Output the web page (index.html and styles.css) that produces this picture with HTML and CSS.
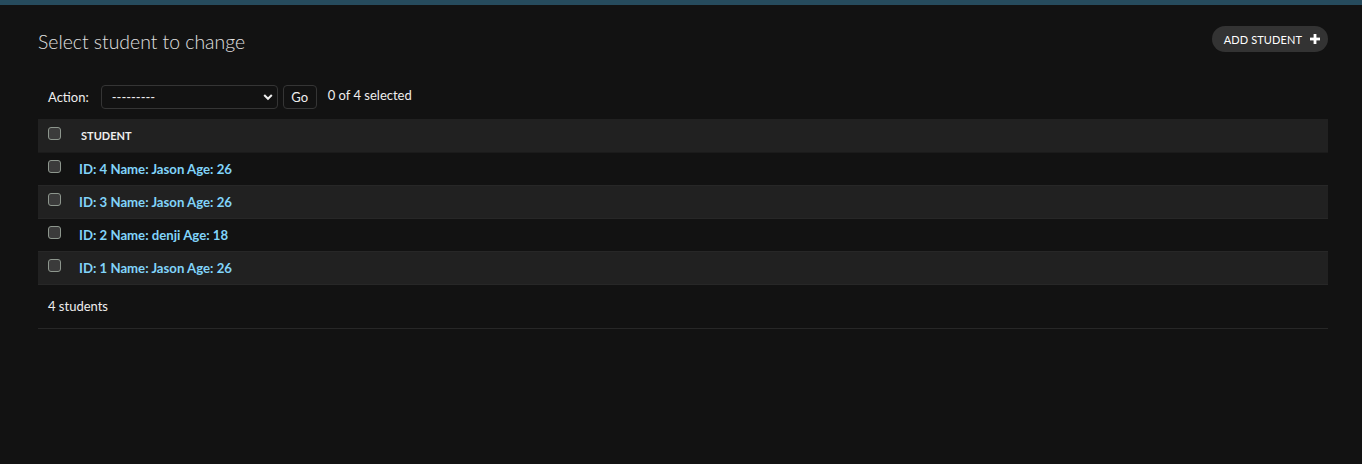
FILE: index.html
```html
<!DOCTYPE html>
<html lang="en">
<head>
<meta charset="utf-8">
<title>Select student to change</title>
<link rel="stylesheet" href="styles.css">
</head>
<body>
<div class="topbar"></div>
<main class="content">
  <div class="page-head">
    <h1 class="title">Select student to change</h1>
    <a class="addlink" href="#">ADD STUDENT
      <svg class="plus" width="10" height="10" viewBox="0 0 10 10"><rect x="3.6" y="0" width="2.8" height="10" fill="#fff"/><rect x="0" y="3.6" width="10" height="2.8" fill="#fff"/></svg>
    </a>
  </div>
  <div class="actions">
    <label class="action-label">Action:</label>
    <span class="select-wrap">
      <select class="action-select"><option>---------</option></select>
      <svg class="chev" width="10" height="8" viewBox="0 0 10 8"><path d="M1.2 2 L5 5.8 L8.8 2" fill="none" stroke="#eee" stroke-width="2"/></svg>
    </span>
    <button class="go">Go</button>
    <span class="counter">0 of 4 selected</span>
  </div>
  <table class="result-list">
    <thead>
      <tr><th class="cb-col"><input type="checkbox" class="cb"></th><th class="col-head">STUDENT</th></tr>
    </thead>
    <tbody>
      <tr><td class="cb-col"><input type="checkbox" class="cb"></td><td><a href="#">ID: 4 Name: Jason Age: 26</a></td></tr>
      <tr><td class="cb-col"><input type="checkbox" class="cb"></td><td><a href="#">ID: 3 Name: Jason Age: 26</a></td></tr>
      <tr><td class="cb-col"><input type="checkbox" class="cb"></td><td><a href="#">ID: 2 Name: denji Age: 18</a></td></tr>
      <tr><td class="cb-col"><input type="checkbox" class="cb"></td><td><a href="#">ID: 1 Name: Jason Age: 26</a></td></tr>
    </tbody>
  </table>
  <p class="paginator">4 students</p>
</main>
</body>
</html>
```
FILE: styles.css
```css
html, body {
  margin: 0;
  padding: 0;
  background: #121212;
  color: #eeeeee;
  font-family: Lato, "Noto Sans", sans-serif;
  font-size: 13px;
}
.topbar {
  height: 5px;
  background: #264b5d;
}
.content {
  margin: 0 34px 0 38px;
}
.page-head {
  display: flex;
  justify-content: space-between;
  align-items: flex-start;
  margin-top: 21px;
}
.title {
  margin: 0;
  padding-top: 4px;
  font-size: 19.4px;
  font-weight: 300;
  line-height: 24px;
  color: #e0e0e0;
}
.addlink {
  display: flex;
  align-items: center;
  height: 26px;
  box-sizing: border-box;
  padding: 0 8px 0 12px;
  border-radius: 13px;
  background: #333333;
  color: #ffffff;
  font-size: 11px;
  letter-spacing: 0.1px;
  text-decoration: none;
  gap: 8px;
}
.actions {
  display: flex;
  align-items: center;
  margin-top: 31px;
  padding: 0 10px;
  height: 24px;
}
.action-label {
  margin-right: 12px;
}
.select-wrap {
  position: relative;
  display: inline-block;
}
.action-select {
  appearance: none;
  -webkit-appearance: none;
  width: 177px;
  height: 24px;
  box-sizing: border-box;
  padding: 0 10px;
  border: 1px solid #353535;
  border-radius: 4px;
  background: #121212;
  color: #eeeeee;
  font-family: inherit;
  font-size: 13px;
}
.chev {
  position: absolute;
  right: 5px;
  top: 8px;
  pointer-events: none;
}
.go {
  margin-left: 5px;
  width: 34px;
  height: 24px;
  box-sizing: border-box;
  border: 1px solid #353535;
  border-radius: 4px;
  background: #121212;
  color: #eeeeee;
  font-family: inherit;
  font-size: 13px;
  padding: 0;
}
.counter {
  margin-left: 11px;
  margin-top: -4px;
}
.result-list {
  width: 100%;
  margin-top: 10px;
  border-collapse: collapse;
}
.result-list th, .result-list td {
  height: 33px;
  box-sizing: border-box;
  border-bottom: 1px solid #272727;
  text-align: left;
  vertical-align: middle;
  padding: 0;
}
.result-list thead th {
  background: #212121;
  border-bottom: 1px solid #1b1b1b;
}
.cb-col {
  width: 33px;
  padding-left: 10px !important;
}
.col-head {
  padding-left: 10px !important;
  font-size: 11px;
  font-weight: 700;
  color: #eeeeee;
}
.result-list tbody tr:nth-child(even) td {
  background: #212121;
}
.result-list td a {
  color: #81d4fa;
  font-weight: 700;
  font-size: 13.2px;
  text-decoration: none;
  padding-left: 8px;
}
.cb {
  appearance: none;
  -webkit-appearance: none;
  display: block;
  width: 13px;
  height: 13px;
  margin: 0;
  box-sizing: border-box;
  border: 1px solid #8d968d;
  border-radius: 3px;
  background: #3b3b3b;
  position: relative;
  top: -2px;
}
.paginator {
  margin: 0;
  height: 43px;
  line-height: 43px;
  padding: 0 10px;
  border-bottom: 1px solid #272727;
}
```
